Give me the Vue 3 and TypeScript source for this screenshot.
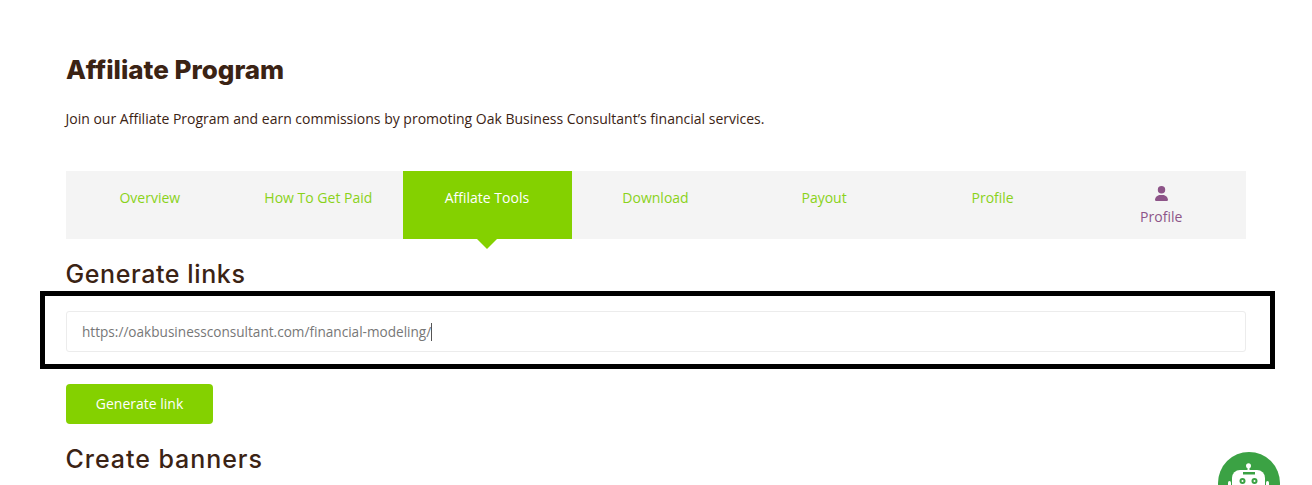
<template>
  <div class="page">
    <h1 class="title">Affiliate Program</h1>
    <p class="intro">Join our Affiliate Program and earn commissions by promoting Oak Business Consultant’s financial services.</p>

    <nav class="tabs">
      <a
        v-for="tab in tabs"
        :key="tab.label + tab.account"
        class="tab"
        :class="{ active: tab.active, account: tab.account }"
      >
        <svg v-if="tab.account" class="user-icon" viewBox="0 0 448 512" width="13" height="15">
          <path fill="currentColor" d="M224 256a128 128 0 1 0 0-256 128 128 0 1 0 0 256zm-45.700 48C79.800 304 0 383.800 0 482.300 0 498.700 13.300 512 29.700 512h388.600c16.400 0 29.700-13.300 29.700-29.700C448 383.800 368.200 304 269.700 304h-91.400z" />
        </svg>
        <span>{{ tab.label }}</span>
      </a>
    </nav>

    <h2 class="section-title first">Generate links</h2>
    <div class="highlight">
      <div class="link-input">
        <span>{{ link }}</span><i class="caret"></i>
      </div>
    </div>
    <button type="button" class="generate">Generate link</button>
    <h2 class="section-title banners">Create banners</h2>

    <div class="bot">
      <svg viewBox="0 0 62 62" width="62" height="62">
        <circle cx="31" cy="31" r="31" fill="#3ba244" />
        <circle cx="30.500" cy="13.700" r="2.500" fill="#fff" />
        <rect x="29.500" y="15" width="2" height="4" fill="#fff" />
        <rect x="14" y="18" width="33" height="32" rx="8" fill="#fff" />
        <rect x="10" y="29" width="3" height="14" rx="1.500" fill="#fff" />
        <rect x="48" y="29" width="3" height="14" rx="1.500" fill="#fff" />
        <rect x="25" y="20" width="12" height="2.500" fill="#3ba244" />
        <circle cx="24.500" cy="29" r="3" fill="#3ba244" />
        <circle cx="36.500" cy="29" r="3" fill="#3ba244" />
        <circle cx="24.500" cy="29" r="1" fill="#fff" />
        <circle cx="36.500" cy="29" r="1" fill="#fff" />
      </svg>
    </div>
  </div>
</template>

<script setup lang="ts">
interface Tab {
  label: string;
  active?: boolean;
  account?: boolean;
}

const tabs: Tab[] = [
  { label: 'Overview' },
  { label: 'How To Get Paid' },
  { label: 'Affilate Tools', active: true },
  { label: 'Download' },
  { label: 'Payout' },
  { label: 'Profile' },
  { label: 'Profile', account: true },
];

const link = 'https://oakbusinessconsultant.com/financial-modeling/';
</script>

<style>
html,
body {
  margin: 0;
  overflow: hidden;
  background: #fff;
}
</style>

<style scoped>
.page {
  position: relative;
  box-sizing: border-box;
  width: 1312px;
  height: 485px;
  overflow: hidden;
  padding: 54px 66px 0;
  font-family: "Open Sans", sans-serif;
  color: #3b2314;
}

.title {
  margin: 0;
  font-family: Inter, sans-serif;
  font-size: 26px;
  line-height: 32px;
  font-weight: 800;
}

.intro {
  margin: 23px 0 0 -0.5px;
  font-size: 14px;
  line-height: 20px;
}

.tabs {
  display: grid;
  grid-template-columns: repeat(7, 1fr);
  width: 1180px;
  height: 68px;
  margin-top: 42px;
  background: #f4f4f4;
}

.tab {
  position: relative;
  display: flex;
  flex-direction: column;
  align-items: center;
  justify-content: center;
  padding: 0 1px 14px 0;
  font-size: 14px;
  line-height: 20px;
  color: #8ad21a;
}

.tab.active {
  background: #84d100;
  color: #fff;
}

.tab.active::after {
  content: "";
  position: absolute;
  top: 100%;
  left: 50%;
  margin-left: -10px;
  border-top: 10px solid #84d100;
  border-left: 10px solid transparent;
  border-right: 10px solid transparent;
}

.tab.account {
  padding: 2px 1px 0 0;
  color: #8d5488;
}

.user-icon {
  margin-bottom: 6px;
}

.section-title {
  margin: 0 0 0 -0.5px;
  font-family: Inter, sans-serif;
  font-size: 25px;
  line-height: 32px;
  font-weight: 500;
  letter-spacing: 0.6px;
}

.section-title.first {
  margin-top: 19px;
}

.highlight {
  box-sizing: border-box;
  width: 1235px;
  height: 78px;
  margin: 1px 0 15px -26px;
  padding: 15px 24px 0 21px;
  border: 5px solid #000;
}

.link-input {
  box-sizing: border-box;
  display: flex;
  align-items: center;
  height: 41px;
  padding-left: 15px;
  border: 1px solid #ececec;
  border-radius: 3px;
  background: #fff;
  font-size: 13.6px;
  color: #777;
}

.caret {
  width: 1px;
  height: 18px;
  background: #555;
}

.generate {
  display: block;
  width: 147px;
  height: 40px;
  padding: 0 0 2px;
  border: none;
  border-radius: 4px;
  background: #84d100;
  color: #fff;
  font-family: "Open Sans", sans-serif;
  font-size: 14px;
}

.section-title.banners {
  margin-top: 19px;
  letter-spacing: 0.95px;
}

.bot {
  position: absolute;
  left: 1218px;
  top: 452px;
  width: 62px;
  height: 62px;
}
</style>
